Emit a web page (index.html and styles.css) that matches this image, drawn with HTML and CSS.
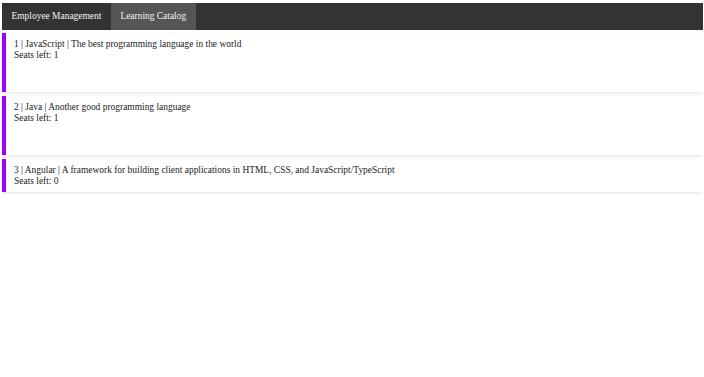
FILE: index.html
```html
<!DOCTYPE html>
<html>
<head>
    <title>Learning Catalog</title>
    <link rel="stylesheet" href="styles.css">
</head>
<body>
    <div class="topnav">
        <a href="#">Employee Management</a>
        <a href="#" class="active">Learning Catalog</a>
    </div>

    <div class="course tall">
        <div>1 | JavaScript | The best programming language in the world</div>
        <div>Seats left: 1</div>
    </div>
    <div class="course tall">
        <div>2 | Java | Another good programming language</div>
        <div>Seats left: 1</div>
    </div>
    <div class="course">
        <div>3 | Angular | A framework for building client applications in HTML, CSS, and JavaScript/TypeScript</div>
        <div>Seats left: 0</div>
    </div>
</body>
</html>
```

FILE: styles.css
```css
body {
    font-family: 'Liberation Serif', serif;
    font-size: 9.45px;
    line-height: 11px;
    color: #222;
    background: #fff;
    margin: 3px 1px 0 2px;
}
.topnav {
    background-color: #333;
    display: flex;
    height: 27px;
    margin-bottom: 3px;
}
.topnav a {
    color: #f2f2f2;
    text-decoration: none;
    padding: 0 9.5px;
    line-height: 27px;
}
.topnav a.active {
    background-color: #555;
}
.course {
    border-left: 4px solid #a000ff;
    box-shadow: 0 1px 3px rgba(0,0,0,0.12);
    padding: 6px 8px 5px;
    margin-bottom: 4px;
}
.course.tall {
    height: 48px;
}
```
